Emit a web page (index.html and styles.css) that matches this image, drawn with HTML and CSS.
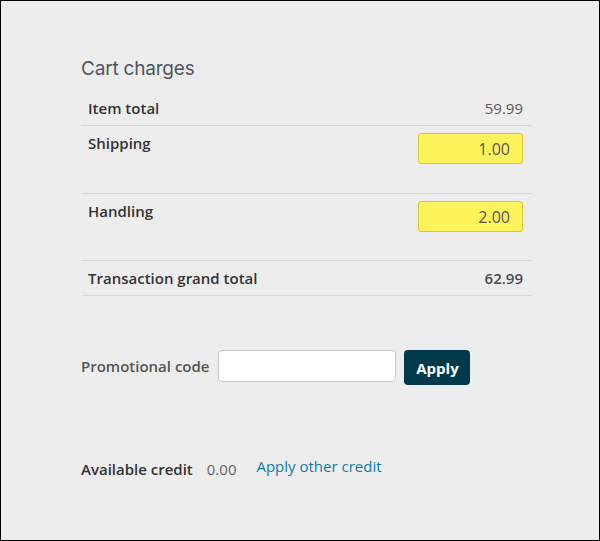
FILE: index.html
```html
<!DOCTYPE html>
<html>
<head>
<meta charset="utf-8">
<link rel="stylesheet" href="styles.css">
</head>
<body>
<div class="frame">
  <div class="panel">
    <h2 class="title">Cart charges</h2>
    <div class="charges">
      <div class="row">
        <span class="label">Item total</span>
        <span class="value">59.99</span>
      </div>
      <div class="row row-input">
        <span class="label">Shipping</span>
        <input class="amount" type="text" value="1.00">
      </div>
      <div class="row row-input row-tight">
        <span class="label">Handling</span>
        <input class="amount" type="text" value="2.00">
      </div>
      <div class="row">
        <span class="label">Transaction grand total</span>
        <span class="value total">62.99</span>
      </div>
    </div>
    <div class="promo">
      <span class="promo-label">Promotional code</span>
      <input class="promo-input" type="text">
      <button class="apply">Apply</button>
    </div>
    <div class="credit">
      <span class="credit-label">Available credit</span>
      <span class="credit-value">0.00</span>
      <a class="credit-link" href="#">Apply other credit</a>
    </div>
  </div>
</div>
</body>
</html>
```
FILE: styles.css
```css
html, body {
  margin: 0;
  padding: 0;
}
body {
  font-family: "Open Sans", "Liberation Sans", sans-serif;
  font-size: 15px;
  color: #333;
}
.frame {
  width: 600px;
  height: 541px;
  box-sizing: border-box;
  border: 1px solid #000;
  background: #ededed;
}
.panel {
  width: 450px;
  padding: 56px 0 0 80px;
}
.title {
  margin: 0 0 10px 0;
  font-family: Inter, "Noto Sans", sans-serif;
  font-weight: 400;
  font-size: 19px;
  line-height: 24px;
  color: #50555e;
  letter-spacing: -0.2px;
}
.charges {
  display: flex;
  flex-direction: column;
}
.row {
  display: flex;
  justify-content: space-between;
  align-items: flex-start;
  padding: 7px 8px 7px 7px;
  line-height: 20px;
  border-bottom: 1px solid #d8d8d8;
}
.row-input {
  padding-bottom: 29px;
}
.row-tight {
  padding-bottom: 28px;
}
.label {
  font-weight: 600;
  color: #333;
}
.value {
  color: #5a5a5a;
}
.value.total {
  font-weight: 600;
  color: #4a4a4a;
}
.amount {
  width: 105px;
  height: 31px;
  box-sizing: border-box;
  margin: 0;
  background: #fff35c;
  border: 1px solid #d6c845;
  border-radius: 3px;
  padding: 0 12px 0 6px;
  text-align: right;
  font-family: "Open Sans", "Liberation Sans", sans-serif;
  font-size: 16px;
  color: #555;
}
.promo {
  display: flex;
  align-items: center;
  margin-top: 51px;
}
.promo-label {
  font-weight: 600;
  color: #555;
  margin-right: 9px;
}
.promo-input {
  width: 178px;
  height: 32px;
  box-sizing: border-box;
  margin: 0 8px 0 0;
  background: #fff;
  border: 1px solid #c8c8c8;
  border-radius: 4px;
}
.apply {
  width: 66px;
  height: 35px;
  margin-top: 3px;
  background: #003a4c;
  color: #fff;
  border: none;
  border-radius: 4px;
  font-family: "Open Sans", "Liberation Sans", sans-serif;
  font-weight: 700;
  font-size: 15px;
  padding: 0;
}
.credit {
  display: flex;
  align-items: baseline;
  margin-top: 74px;
}
.credit-label {
  font-weight: 600;
  color: #333;
  margin-right: 14px;
}
.credit-value {
  color: #666;
  margin-right: 20px;
}
.credit-link {
  color: #0a7ea8;
  text-decoration: none;
  position: relative;
  top: -3px;
}
```
